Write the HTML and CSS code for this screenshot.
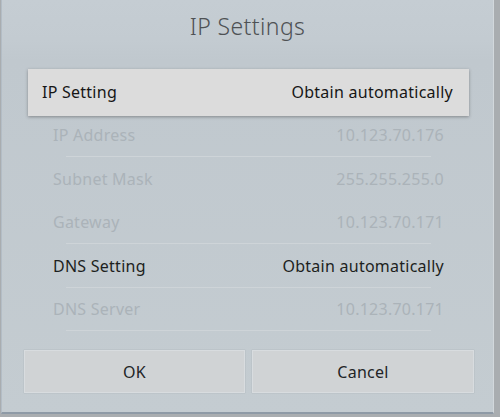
FILE: index.html
```html
<!DOCTYPE html>
<html>
<head>
<meta charset="utf-8">
<link rel="stylesheet" href="styles.css">
</head>
<body>
<div class="screen">
  <div class="dialog">
    <div class="title">IP Settings</div>
    <div class="list">
      <div class="row focused"><span>IP Setting</span><span>Obtain automatically</span></div>
      <div class="row disabled sep"><span>IP Address</span><span>10.123.70.176</span></div>
      <div class="row disabled"><span>Subnet Mask</span><span>255.255.255.0</span></div>
      <div class="row disabled sep"><span>Gateway</span><span>10.123.70.171</span></div>
      <div class="row sep"><span>DNS Setting</span><span>Obtain automatically</span></div>
      <div class="row disabled sep"><span>DNS Server</span><span>10.123.70.171</span></div>
    </div>
    <div class="buttons">
      <div class="btn">OK</div>
      <div class="btn">Cancel</div>
    </div>
  </div>
</div>
</body>
</html>
```
FILE: styles.css
```css
html, body {
  margin: 0;
  padding: 0;
}
body {
  width: 500px;
  height: 417px;
  overflow: hidden;
  background: #a9adb0;
  font-family: "Noto Sans", "Open Sans", sans-serif;
}
.screen {
  width: 500px;
  height: 417px;
  display: flex;
}
.dialog {
  width: 491px;
  height: 412px;
  margin-left: 1px;
  background: linear-gradient(180deg, #c5cdd3 0px, #c3cbd1 40px, #c0c8ce 60px, #c4ccd1 417px);
  border-right: 1px solid #d2d8dc;
  border-bottom: 2px solid #8e9aa6;
  border-left: 1px solid #b3bdc6;
  display: flex;
  flex-direction: column;
}
.title {
  height: 50px;
  display: flex;
  align-items: center;
  justify-content: center;
  font-size: 23px;
  letter-spacing: 0.4px;
  font-weight: 300;
  color: #4e5154;
  padding-top: 2px;
  box-sizing: border-box;
}
.list {
  margin: 21px 0 0 37px;
  width: 419px;
  display: flex;
  flex-direction: column;
}
.row {
  height: 43.5px;
  padding: 0 14px;
  display: flex;
  align-items: center;
  justify-content: space-between;
  font-size: 16px;
  letter-spacing: 0.25px;
  color: #1d1f21;
  position: relative;
}
.row.sep::after {
  content: "";
  position: absolute;
  left: 27px;
  right: 27px;
  bottom: 0;
  height: 1px;
  background: #ced4d8;
}
.row.disabled {
  color: #abb3b9;
}
.focused {
  height: 47px;
  margin: -2.5px -11px -2px -11px;
  padding: 0 16px 0 14px;
  background: #dcdcdc;
  box-shadow: 0 1px 3px rgba(60, 60, 60, 0.45);
  color: #161616;
  z-index: 1;
}
.buttons {
  margin: 19px 0 0 22px;
  display: flex;
  gap: 7px;
}
.btn {
  width: 221px;
  height: 43px;
  box-sizing: border-box;
  background: #d0d3d5;
  border: 1px solid #d8dcdf;
  box-shadow: 0 0 1px rgba(120, 128, 135, 0.5);
  display: flex;
  align-items: center;
  justify-content: center;
  font-size: 16px;
  letter-spacing: 0.25px;
  color: #222426;
}
.btn + .btn {
  width: 222px;
}
```
